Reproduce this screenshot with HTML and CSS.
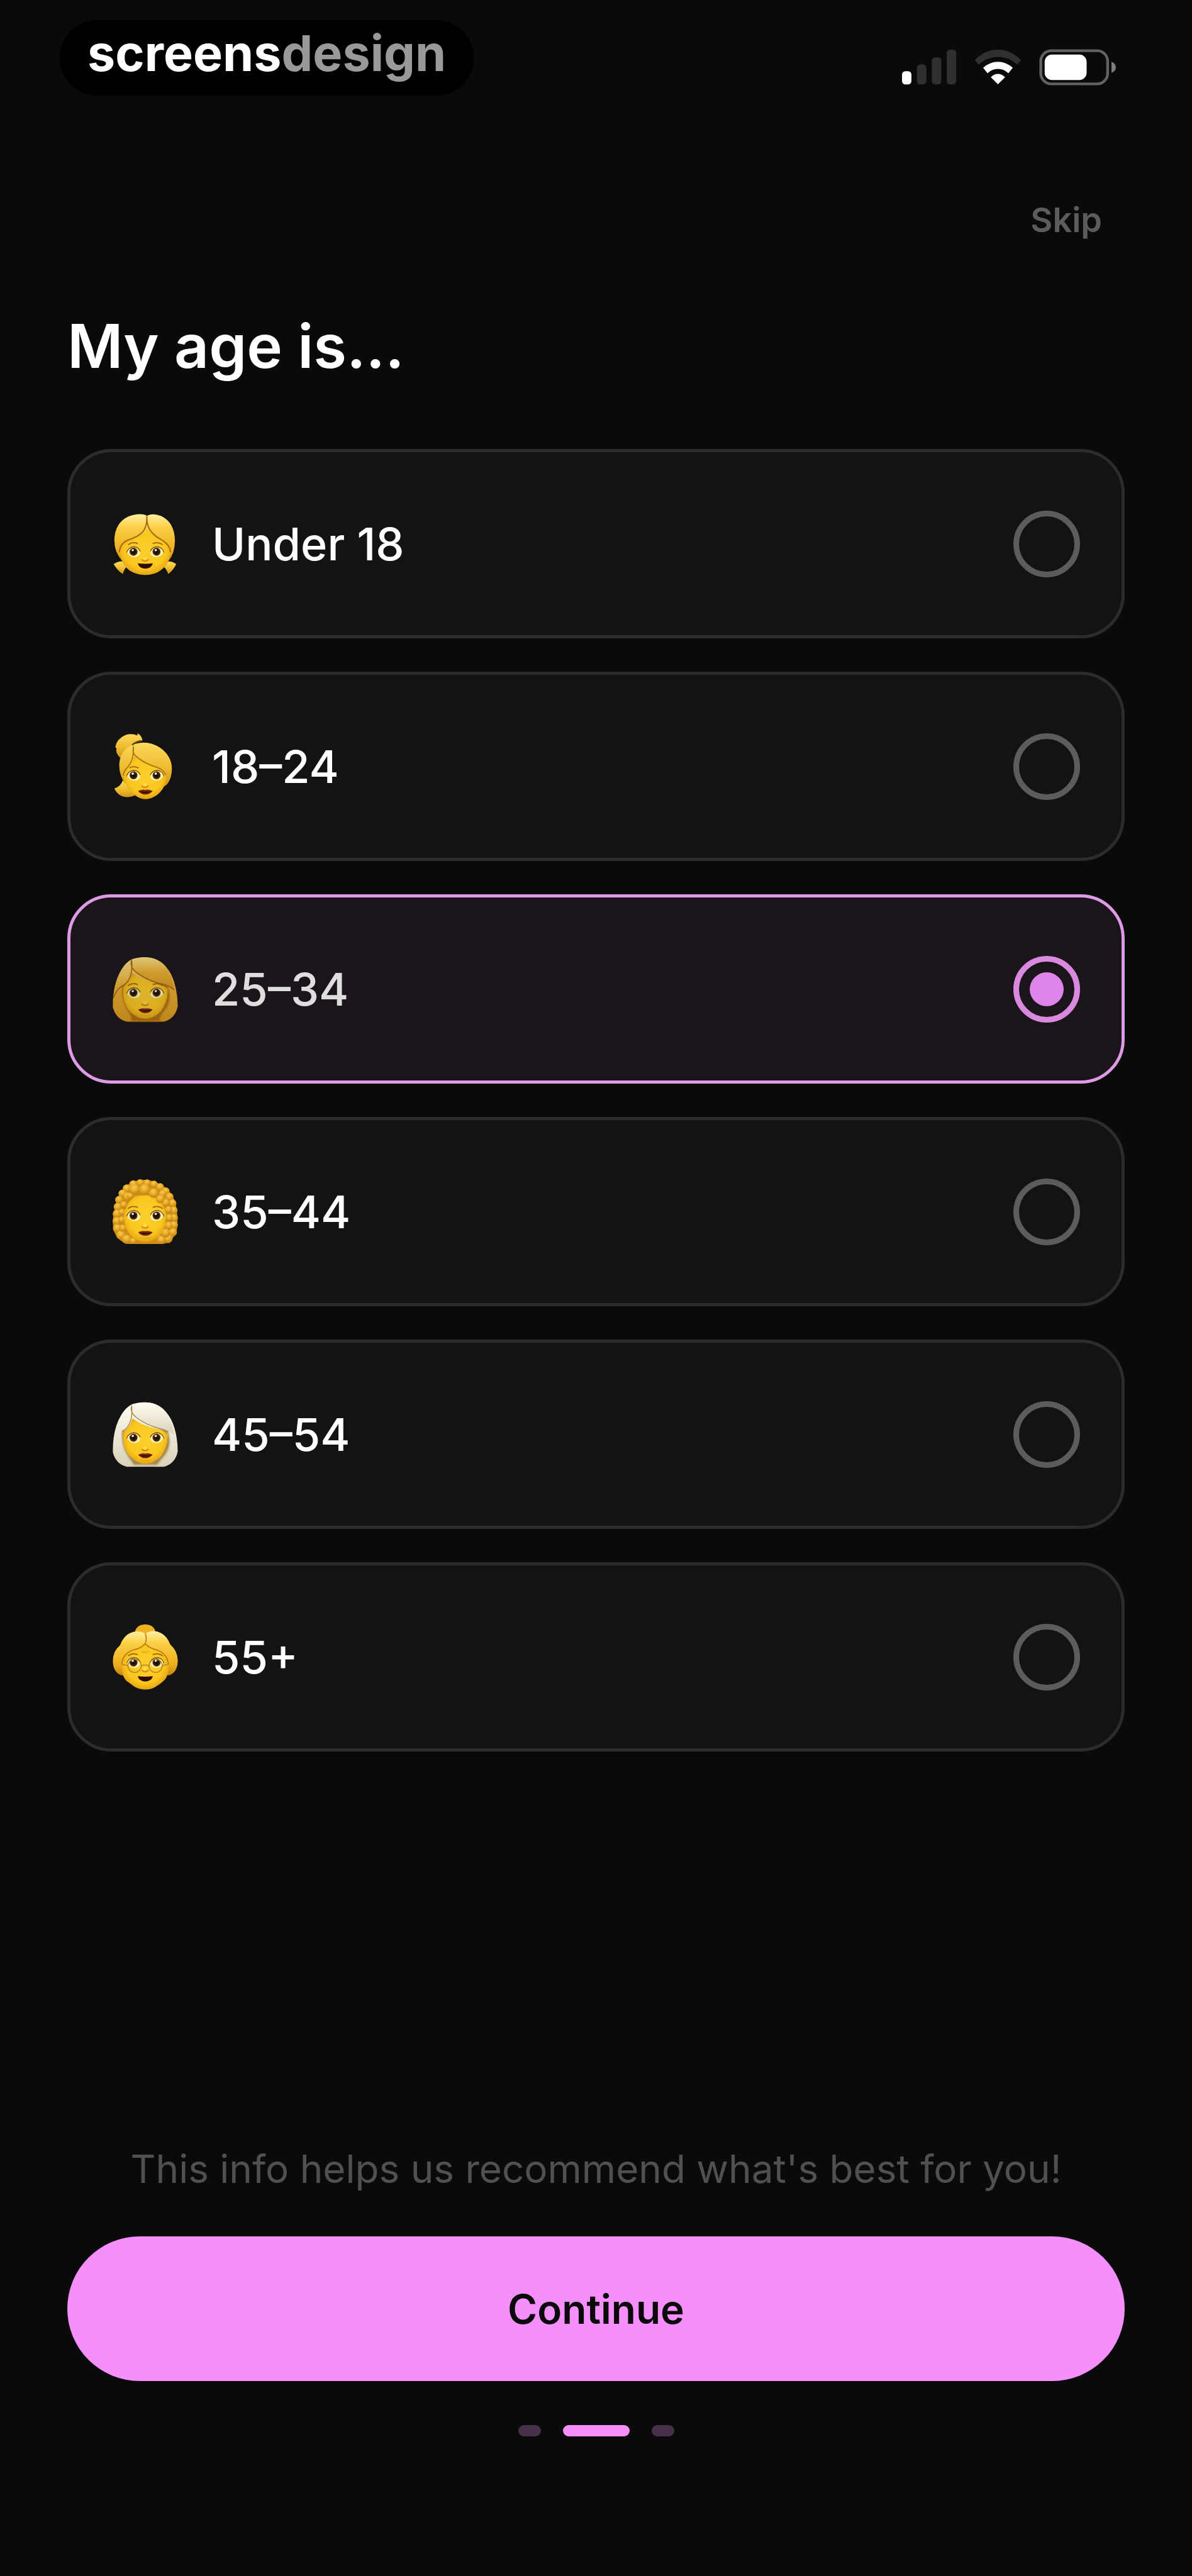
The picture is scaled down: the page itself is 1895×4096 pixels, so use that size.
FILE: index.html
```html
<!DOCTYPE html>
<html lang="en">
<head>
    <meta charset="UTF-8">
    <meta name="viewport" content="width=device-width, initial-scale=1.0">
    <title>My age is...</title>
    <link rel="stylesheet" href="styles.css">
</head>
<body>

<!-- Shared gradients and facial features for the avatars -->
<svg class="defs" width="0" height="0" aria-hidden="true">
    <defs>
        <radialGradient id="skin" cx="50%" cy="45%" r="62%">
            <stop offset="0" stop-color="#fdcf2c"/>
            <stop offset="0.65" stop-color="#fac71f"/>
            <stop offset="1" stop-color="#dc9412"/>
        </radialGradient>
        <linearGradient id="blonde" x1="0" y1="0" x2="0" y2="1">
            <stop offset="0" stop-color="#fff0a0"/>
            <stop offset="0.28" stop-color="#fbcf45"/>
            <stop offset="0.75" stop-color="#eeb01f"/>
            <stop offset="1" stop-color="#c98410"/>
        </linearGradient>
        <linearGradient id="gold" x1="0" y1="0" x2="0" y2="1">
            <stop offset="0" stop-color="#fbd95c"/>
            <stop offset="0.55" stop-color="#efbd30"/>
            <stop offset="1" stop-color="#cf9417"/>
        </linearGradient>
        <linearGradient id="honey" x1="0" y1="0" x2="0" y2="1">
            <stop offset="0" stop-color="#ffe68c"/>
            <stop offset="0.45" stop-color="#edb233"/>
            <stop offset="1" stop-color="#d99a1c"/>
        </linearGradient>
        <linearGradient id="silver" x1="0" y1="0" x2="0" y2="1">
            <stop offset="0" stop-color="#fffdf2"/>
            <stop offset="0.5" stop-color="#ece7d6"/>
            <stop offset="1" stop-color="#d9d2b8"/>
        </linearGradient>
        <radialGradient id="curl" cx="45%" cy="30%" r="65%">
            <stop offset="0" stop-color="#f9cd4c"/>
            <stop offset="0.55" stop-color="#e5a726"/>
            <stop offset="1" stop-color="#c48515"/>
        </radialGradient>
        <radialGradient id="iris" cx="50%" cy="50%" r="50%">
            <stop offset="0" stop-color="#140a04"/>
            <stop offset="0.6" stop-color="#2a1708"/>
            <stop offset="1" stop-color="#69451a"/>
        </radialGradient>
        <filter id="soft" x="-20%" y="-20%" width="140%" height="140%">
            <feGaussianBlur stdDeviation="6"/>
        </filter>
        <!-- eyes are centred on y = 0 -->
        <g id="eyes">
            <path d="M181 0Q190-24 216-25Q243-23 253 8Q245 29 219 29Q192 27 181 0Z" fill="#fff3b8"/>
            <path d="M379 0Q370-24 344-25Q317-23 307 8Q315 29 341 29Q368 27 379 0Z" fill="#fff3b8"/>
            <circle cx="216" cy="0" r="22" fill="url(#iris)"/>
            <circle cx="341" cy="0" r="22" fill="url(#iris)"/>
            <circle cx="212" cy="-9" r="6" fill="#fff"/>
            <circle cx="337" cy="-9" r="6" fill="#fff"/>
            <path d="M179 3Q190-26 217-27Q242-26 252-4" fill="none" stroke="#6b430c" stroke-width="4" stroke-linecap="round"/>
            <path d="M381 3Q370-26 343-27Q318-26 308-4" fill="none" stroke="#6b430c" stroke-width="4" stroke-linecap="round"/>
        </g>
        <g id="brows">
            <path d="M188-39Q209-56 237-45" fill="none" stroke="#9a6410" stroke-width="6" stroke-linecap="round"/>
            <path d="M372-39Q351-56 323-45" fill="none" stroke="#9a6410" stroke-width="6" stroke-linecap="round"/>
        </g>
        <g id="nose">
            <path d="M262 59Q278 72 295 59" fill="none" stroke="#d58f10" stroke-width="8" stroke-linecap="round"/>
            <ellipse cx="278" cy="51" rx="11" ry="9" fill="#ffd84d"/>
        </g>
        <g id="lips">
            <path d="M241 92Q261 84 272 85Q280 88 288 85Q300 84 320 92Q305 111 280 112Q256 111 241 92Z" fill="#7a2d10"/>
            <path d="M243 92Q280 99 318 92Q300 104 280 104Q260 104 243 92Z" fill="#3d0d06"/>
            <path d="M256 121Q280 128 305 121" fill="none" stroke="#e5a516" stroke-width="5" stroke-linecap="round"/>
        </g>
        <path id="smile" d="M239 62Q280 67 321 62Q314 90 280 91Q246 90 239 62Z" fill="#300b05"/>
    </defs>
</svg>

<div class="screen">
    <header class="status-bar">
        <div class="logo">screens<span class="logo-light">design</span></div>
        <div class="status-icons">
            <svg class="signal" viewBox="0 0 99 66" aria-hidden="true">
                <rect x="0" y="40" width="17" height="24" rx="6" fill="#fff"/>
                <rect x="27" y="28" width="17" height="36" rx="6" fill="#303030"/>
                <rect x="54" y="15" width="17" height="49" rx="6" fill="#303030"/>
                <rect x="81" y="1" width="17" height="63" rx="6" fill="#303030"/>
            </svg>
            <svg class="wifi" viewBox="0 0 86 66" aria-hidden="true">
                <path d="M1 20Q19 1 43 1Q67 1 85 20L78 28Q63 14 43 14Q23 14 8 28Z" fill="#303030"/>
                <path d="M16 34Q28 23 43 23Q58 23 70 34L62 44Q54 36 43 36Q32 36 24 44Z" fill="#fff"/>
                <path d="M30 51Q36 45 43 45Q50 45 56 51L43 64Z" fill="#fff"/>
            </svg>
            <svg class="battery" viewBox="0 0 139 66" aria-hidden="true">
                <rect x="3" y="3" width="121" height="60" rx="19" fill="#0a0a0a" stroke="#626262" stroke-width="5"/>
                <rect x="10" y="10" width="76" height="46" rx="13" fill="#fff"/>
                <path d="M131 23Q139 26 139 33Q139 40 131 43Z" fill="#7c7c7c"/>
            </svg>
        </div>
    </header>

    <nav class="top-nav">
        <button type="button" class="skip">Skip</button>
    </nav>

    <form class="age-form">
        <h1 id="age-title">My age is...</h1>

        <div class="options" role="radiogroup" aria-labelledby="age-title">
            <label class="option">
                <svg class="avatar" viewBox="99 74 362 362" aria-hidden="true">
                    <path d="M108 364Q135 345 174 350L182 376Q166 388 158 418Q130 400 108 364Z" fill="url(#gold)"/>
                    <path d="M448 364Q423 345 384 350L376 376Q395 388 404 418Q430 400 448 364Z" fill="url(#gold)"/>
                    <path d="M290 101Q322 86 366 103Q438 137 441 235Q441 305 405 348L150 340Q112 300 112 232Q116 138 190 105Q250 83 290 101Z" fill="url(#blonde)"/>
                    <path d="M287 176Q265 212 215 232Q155 255 139 296Q147 342 165 370Q207 423 281 423Q351 423 392 370Q410 345 418 300Q400 253 351 229Q306 209 287 176Z" fill="url(#skin)"/>
                    <path d="M288 102Q291 163 263 193Q237 218 190 232Q143 250 139 299M288 102Q287 162 315 192Q340 219 370 233Q413 258 417 299" fill="none" stroke="#a86c12" stroke-width="7"/>
                    <use href="#eyes" y="297"/>
                    <use href="#brows" y="297"/>
                    <use href="#nose" y="282"/>
                    <use href="#smile" y="298"/>
                </svg>
                <span class="option-text">Under 18</span>
                <input type="radio" name="age" value="under-18">
            </label>

            <label class="option">
                <svg class="avatar" viewBox="99 84 362 362" aria-hidden="true">
                    <path d="M157 340Q148 372 112 383Q131 427 178 431Q213 431 234 413Z" fill="url(#gold)"/>
                    <path d="M144 218Q115 187 124 165L117 159Q125 113 172 93Q207 82 237 96L238 84Q260 95 265 122Q225 132 207 151Q171 167 144 218Z" fill="url(#gold)"/>
                    <path d="M218 143Q293 118 361 163Q424 208 424 275Q422 345 382 373L164 350Q128 285 143 222Q158 168 218 143Z" fill="url(#gold)"/>
                    <path d="M218 211Q240 234 300 258Q365 276 395 305Q397 378 344 419Q280 465 220 418Q170 379 160 309Q166 285 188 267Q212 247 218 211Z" fill="url(#skin)"/>
                    <path d="M219 147Q208 183 231 207Q265 241 325 263Q365 274 389 293Q405 318 385 372Q422 345 424 275Q417 202 361 163Q293 121 219 147Z" fill="url(#gold)"/>
                    <path d="M217 154Q207 188 227 207Q267 242 325 263Q377 275 391 310M216 163Q217 231 185 267Q161 290 161 314" fill="none" stroke="#ab7612" stroke-width="6"/>
                    <path d="M208 148Q234 125 262 125" fill="none" stroke="#6b4708" stroke-width="8"/>
                    <path d="M196 271Q215 260 242 272" fill="none" stroke="#9a6410" stroke-width="6" stroke-linecap="round"/>
                    <use href="#eyes" y="312"/>
                    <use href="#nose" y="312"/>
                    <use href="#lips" y="305"/>
                </svg>
                <span class="option-text">18–24</span>
                <input type="radio" name="age" value="18-24">
            </label>

            <label class="option selected">
                <svg class="avatar" viewBox="99 95 362 362" aria-hidden="true">
                    <path d="M207 113Q242 100 303 104Q377 116 420 195Q455 265 456 369Q442 436 380 452H180Q121 438 104 374Q101 250 151 168Q174 130 207 113Z" fill="url(#honey)"/>
                    <path d="M155 255Q145 340 196 410Q212 435 200 450H360Q350 430 388 387Q430 325 397 250Z" fill="#b06f0e" filter="url(#soft)"/>
                    <path d="M210 189Q260 224 318 240Q377 251 401 275Q406 340 364 397Q318 438 280 436Q235 437 190 390Q151 335 161 263Q198 235 210 189Z" fill="url(#skin)"/>
                    <path d="M208 118Q190 153 233 184Q285 225 352 243Q407 253 437 280Q426 205 398 163Q360 105 280 102Q240 101 208 118Z" fill="url(#honey)"/>
                    <path d="M207 116Q193 153 230 184Q285 225 352 243Q407 253 437 280M206 125Q211 186 193 219Q178 249 151 260Q117 286 108 322" fill="none" stroke="#a86b10" stroke-width="6"/>
                    <use href="#eyes" y="295"/>
                    <use href="#brows" y="295"/>
                    <use href="#nose" y="298"/>
                    <use href="#lips" y="294"/>
                </svg>
                <span class="option-text">25–34</span>
                <input type="radio" name="age" value="25-34" checked>
            </label>

            <label class="option">
                <svg class="avatar" viewBox="99 76 362 362" aria-hidden="true">
                    <path d="M215 93Q280 70 345 99Q425 135 445 215Q460 290 452 350Q435 420 375 431H185Q124 415 107 351Q98 290 119 215Q143 125 215 93Z" fill="#cf9019"/>
                    <g fill="url(#curl)">
                        <circle cx="215" cy="107" r="22"/><circle cx="252" cy="99" r="20"/><circle cx="290" cy="100" r="20"/><circle cx="327" cy="107" r="20"/>
                        <circle cx="360" cy="123" r="22"/><circle cx="391" cy="145" r="21"/><circle cx="411" cy="175" r="22"/><circle cx="428" cy="210" r="21"/>
                        <circle cx="434" cy="249" r="21"/><circle cx="436" cy="289" r="21"/><circle cx="435" cy="329" r="22"/><circle cx="429" cy="367" r="23"/>
                        <circle cx="402" cy="401" r="26"/><circle cx="367" cy="409" r="23"/><circle cx="180" cy="131" r="23"/><circle cx="156" cy="158" r="22"/>
                        <circle cx="138" cy="192" r="22"/><circle cx="130" cy="230" r="22"/><circle cx="126" cy="268" r="23"/><circle cx="124" cy="307" r="22"/>
                        <circle cx="127" cy="347" r="23"/><circle cx="147" cy="383" r="25"/><circle cx="179" cy="406" r="25"/><circle cx="213" cy="415" r="17"/>
                        <circle cx="183" cy="174" r="24"/><circle cx="162" cy="218" r="19"/><circle cx="153" cy="258" r="18"/><circle cx="151" cy="300" r="18"/>
                        <circle cx="158" cy="345" r="19"/><circle cx="374" cy="158" r="21"/><circle cx="390" cy="207" r="22"/><circle cx="406" cy="245" r="20"/>
                        <circle cx="410" cy="289" r="20"/><circle cx="407" cy="332" r="22"/><circle cx="390" cy="372" r="24"/>
                    </g>
                    <path d="M220 175Q270 157 325 173Q385 205 394 280Q390 350 352 392Q315 420 280 419Q235 420 199 383Q163 340 163 276Q174 211 220 175Z" fill="url(#skin)"/>
                    <g fill="url(#curl)">
                        <circle cx="222" cy="135" r="29"/><circle cx="276" cy="136" r="30"/><circle cx="325" cy="155" r="26"/><circle cx="361" cy="187" r="23"/><circle cx="197" cy="170" r="17"/>
                    </g>
                    <use href="#eyes" y="277"/>
                    <use href="#brows" y="277"/>
                    <use href="#nose" y="279"/>
                    <use href="#lips" y="275"/>
                </svg>
                <span class="option-text">35–44</span>
                <input type="radio" name="age" value="35-44">
            </label>

            <label class="option">
                <svg class="avatar" viewBox="99 87 362 362" aria-hidden="true">
                    <path d="M207 104Q242 91 303 95Q377 107 420 186Q455 256 456 360Q442 427 380 443H180Q121 429 104 365Q101 241 151 159Q174 121 207 104Z" fill="url(#silver)"/>
                    <path d="M155 246Q145 331 196 401Q216 421 215 432H345Q350 421 388 378Q430 316 397 241Z" fill="#a2894b" filter="url(#soft)"/>
                    <path d="M210 180Q260 215 318 231Q377 242 401 266Q406 331 364 388Q318 429 280 427Q235 428 190 381Q151 326 161 254Q198 226 210 180Z" fill="url(#skin)"/>
                    <path d="M208 109Q190 144 233 175Q285 216 352 234Q407 244 437 271Q426 196 398 154Q360 96 280 93Q240 92 208 109Z" fill="url(#silver)"/>
                    <path d="M207 110Q193 144 230 175Q285 216 352 234Q388 242 405 254M206 116Q211 177 193 210Q178 240 155 251" fill="none" stroke="#a6884b" stroke-width="5"/>
                    <use href="#eyes" y="285"/>
                    <use href="#nose" y="290"/>
                    <use href="#lips" y="285"/>
                </svg>
                <span class="option-text">45–54</span>
                <input type="radio" name="age" value="45-54">
            </label>

            <label class="option">
                <svg class="avatar" viewBox="99 68 362 362" aria-hidden="true">
                    <path d="M222 122Q226 72 280 71Q333 72 337 122L280 150Z" fill="#efb322"/>
                    <path d="M280 121Q325 94 370 121Q400 138 415 180Q459 218 456 275Q452 334 410 347H149Q105 330 104 270Q104 216 143 184Q160 137 193 120Q237 98 280 121Z" fill="url(#blonde)"/>
                    <path d="M279 174Q253 202 213 209Q157 230 154 285Q148 350 178 378Q203 396 223 410Q252 425 280 425Q310 425 335 410Q363 394 384 374Q410 347 404 284Q399 229 342 209Q302 199 279 174Z" fill="url(#skin)"/>
                    <path d="M280 121Q291 153 279 176Q253 204 213 210Q157 230 152 288M279 176Q302 200 342 210Q399 229 406 288" fill="none" stroke="#bd7c12" stroke-width="6"/>
                    <path d="M256 219Q280 215 302 219M263 226Q280 222 296 226" fill="none" stroke="#dca019" stroke-width="3"/>
                    <use href="#eyes" y="278"/>
                    <use href="#brows" y="280"/>
                    <use href="#nose" y="262"/>
                    <use href="#smile" y="290"/>
                    <g fill="none" stroke="#b0842c" stroke-width="5">
                        <circle cx="222" cy="296" r="36"/>
                        <circle cx="336" cy="296" r="36"/>
                        <path d="M258 295Q280 288 300 295M154 289L187 294M372 294L408 287"/>
                    </g>
                </svg>
                <span class="option-text">55+</span>
                <input type="radio" name="age" value="55-plus">
            </label>
        </div>

        <footer class="footer">
            <p class="note">This info helps us recommend what's best for you!</p>
            <button type="submit" class="continue">Continue</button>
            <div class="steps">
                <span class="step"></span>
                <span class="step active"></span>
                <span class="step"></span>
            </div>
        </footer>
    </form>
</div>

</body>
</html>
```
FILE: styles.css
```css
* {
    box-sizing: border-box;
}
body {
    margin: 0;
    background: #0a0a0a;
    color: #fff;
    font-family: Inter, "Liberation Sans", sans-serif;
}
button {
    border: none;
    font-family: inherit;
    cursor: pointer;
}
.defs {
    position: absolute;
}
.screen {
    display: flex;
    flex-direction: column;
    min-height: 100vh;
}

/* status bar */
.status-bar {
    display: flex;
    justify-content: space-between;
    align-items: flex-start;
    padding: 32px 121px 0 95px;
}
.logo {
    padding: 0 44px 16px;
    border-radius: 60px;
    background: #000;
    font-size: 79px;
    font-weight: 700;
    line-height: 104px;
}
.logo-light {
    color: #999;
}
.status-icons {
    display: flex;
    gap: 28px;
    padding-top: 46px;
}
.status-icons svg {
    display: block;
    height: 58px;
}
.signal {
    width: 87px;
}
.wifi {
    width: 75px;
}
.battery {
    width: 122px;
}

.top-nav {
    display: flex;
    justify-content: flex-end;
    padding: 166px 143px 0;
}
.skip {
    padding: 0;
    background: none;
    color: #5c5c5c;
    font-size: 54px;
    font-weight: 600;
    line-height: 64px;
}

/* form */
.age-form {
    display: flex;
    flex-direction: column;
    flex: 1;
    padding: 110px 107px 222px;
}
h1 {
    margin: 0 0 106px;
    font-size: 96px;
    font-weight: 600;
    line-height: 116px;
}
.options {
    display: flex;
    flex-direction: column;
    gap: 53px;
}
.option {
    display: flex;
    align-items: center;
    gap: 53px;
    min-height: 301px;
    padding: 0 66px;
    border: 5px solid #2c2c2c;
    border-radius: 70px;
    background: #131313;
    cursor: pointer;
}
.option.selected {
    border-color: #df9ae5;
    background: #1b151b;
}
.avatar {
    width: 106px;
    height: 106px;
    flex: none;
    overflow: visible;
}
.option-text {
    flex: 1;
    font-size: 72px;
    font-weight: 500;
    line-height: 84px;
}
.selected .avatar,
.selected .option-text {
    opacity: 0.86;
}
.option input {
    appearance: none;
    display: grid;
    place-items: center;
    width: 106px;
    height: 106px;
    margin: 0;
    border: 9px solid #5c5c5c;
    border-radius: 50%;
}
.option input:checked {
    border-color: #d98ae0;
}
.option input:checked::before {
    content: "";
    width: 54px;
    height: 54px;
    border-radius: 50%;
    background: #df84e8;
}

/* footer */
.footer {
    display: flex;
    flex-direction: column;
    gap: 70px;
    margin-top: auto;
}
.note {
    margin: 0;
    color: #505050;
    font-size: 62px;
    line-height: 74px;
    text-align: center;
}
.continue {
    height: 230px;
    border-radius: 115px;
    background: #f58ffc;
    color: #0a0a0a;
    font-size: 64px;
    font-weight: 600;
}
.steps {
    display: flex;
    justify-content: center;
    gap: 35px;
}
.step {
    width: 36px;
    height: 18px;
    border-radius: 9px;
    background: #48304a;
}
.step.active {
    width: 106px;
    background: #f58ffc;
}
```
